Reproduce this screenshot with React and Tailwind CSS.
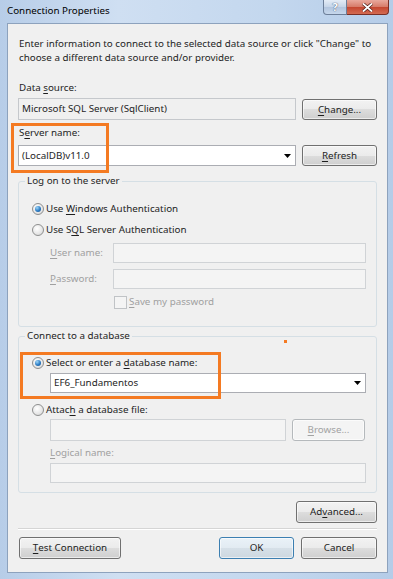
import React from "react";

const U = ({ children }) => <span className="underline underline-offset-[2px] decoration-1">{children}</span>;

function Btn({ children, className = "", kind = "normal" }) {
  const styles =
    kind === "primary"
      ? "border-[#3c7fb1] bg-[linear-gradient(#eaf2f8,#e2ebf2_50%,#d6e0e8_50%,#cdd8e0)] text-[#1e1e1e]"
      : kind === "disabled"
      ? "border-[#b5b9bc] bg-[#f4f4f4] text-[#a3a3a3]"
      : "border-[#707070] bg-[linear-gradient(#f2f2f2,#ebebeb_50%,#dddddd_50%,#cfcfcf)] text-[#1e1e1e]";
  return (
    <div className={`flex items-center justify-center rounded-[3px] border shadow-[inset_0_0_0_1px_rgba(255,255,255,0.6)] ${styles} ${className}`}>
      {children}
    </div>
  );
}

function Radio({ checked }) {
  return (
    <div className="w-[12px] h-[12px] rounded-full border border-[#8e8f8f] bg-[radial-gradient(circle_at_40%_35%,#ffffff,#e6e6e6_60%,#cfcfcf)] flex items-center justify-center shrink-0">
      {checked && (
        <div className="w-[6px] h-[6px] rounded-full bg-[radial-gradient(circle_at_35%_30%,#9fd6f7,#2a7bc4_55%,#1b4f8a)]" />
      )}
    </div>
  );
}

function Arrow() {
  return (
    <svg width="7" height="4" viewBox="0 0 7 4" className="shrink-0">
      <polygon points="0,0 7,0 3.5,4" fill="#000" />
    </svg>
  );
}

export default function App() {
  return (
    <div
      className="relative w-[393px] h-[579px] flex flex-col bg-[linear-gradient(90deg,#b7cde8,#cfdff2_30%,#c3d7ee_70%,#b5cce8)] text-[9.8px] leading-[14px] text-[#1e1e1e] overflow-hidden"
      style={{ fontFamily: '"Segoe UI", "Noto Sans", Arial, sans-serif' }}
    >
      {/* Title bar */}
      <div className="h-[23px] flex items-start shrink-0">
        <div className="pl-[7px] pt-[4px] text-[#000] leading-[14px]">Connection Properties</div>
        <div className="ml-auto mr-[4px] flex">
          <div className="w-[24px] h-[15px] rounded-bl-[4px] border border-t-0 border-[#6d7f99] bg-[linear-gradient(#e4ecf6,#c6d5e8_50%,#b2c5de_50%,#c6d7ec)] flex items-center justify-center text-[11px] font-bold text-white [text-shadow:0_0_1px_#4a5f7e,0_0_1px_#4a5f7e]">
            ?
          </div>
          <div className="w-[42px] h-[15px] rounded-br-[4px] border border-l-0 border-t-0 border-[#7a2f26] bg-[linear-gradient(#e9a99d,#d67a68_50%,#c4452f_50%,#d36b52)] flex items-center justify-center">
            <svg width="11" height="9" viewBox="0 0 11 9">
              <path d="M1 0.5 L10 8.5 M10 0.5 L1 8.5" stroke="#4a1a14" strokeWidth="3.2" />
              <path d="M1 0.5 L10 8.5 M10 0.5 L1 8.5" stroke="#ffffff" strokeWidth="1.8" />
            </svg>
          </div>
        </div>
      </div>

      {/* Client area */}
      <div className="ml-[7px] mr-[5px] h-[550px] border border-[#8da2bd] bg-[#f0f0f0] flex flex-col pl-[10px] pr-[10px] pt-[13px] shrink-0">
        <div className="pl-[1px] whitespace-nowrap">
          <div>Enter information to connect to the selected data source or click "Change" to</div>
          <div>choose a different data source and/or provider.</div>
        </div>

        <div className="mt-[16px] pl-[1px]">
          Data <U>s</U>ource:
        </div>
        <div className="mt-[3px] flex items-start">
          <div className="w-[278px] h-[22px] border border-[#c5c8cc] bg-[#f0f0f0] flex items-center pl-[3px]">
            Microsoft SQL Server (SqlClient)
          </div>
          <Btn className="ml-auto w-[75px] h-[21px] mt-[1px]">
            <U>C</U>hange...
          </Btn>
        </div>

        <div className="mt-[6px] pl-[1px]">
          S<U>e</U>rver name:
        </div>
        <div className="mt-[5px] flex items-start">
          <div className="w-[278px] h-[21px] border border-[#abadb3] bg-white flex items-center pl-[3px] pr-[4px]">
            <span>(LocalDB)v11.0</span>
            <div className="ml-auto">
              <Arrow />
            </div>
          </div>
          <Btn className="ml-auto w-[75px] h-[21px]">
            <U>R</U>efresh
          </Btn>
        </div>

        {/* Log on group */}
        <fieldset className="mt-[8px] border border-[#d5dfe5] rounded-[3px] pl-[13px] pr-[10px] pb-[17px]">
          <legend className="-ml-[7px] px-[2px] leading-[14px]">Log on to the server</legend>
          <div className="mt-[14px] flex items-center h-[14px]">
            <Radio checked />
            <span className="ml-[2px]">
              Use <U>W</U>indows Authentication
            </span>
          </div>
          <div className="mt-[7px] flex items-center h-[14px]">
            <Radio />
            <span className="ml-[2px]">
              Use S<U>Q</U>L Server Authentication
            </span>
          </div>
          <div className="mt-[6px] flex items-center h-[20px] text-[#a0a0a0]">
            <span className="pl-[18px] whitespace-nowrap">
              <U>U</U>ser name:
            </span>
            <div className="ml-auto w-[253px] h-[20px] border border-[#d0d3d6] bg-[#f4f4f4]" />
          </div>
          <div className="mt-[6px] flex items-center h-[20px] text-[#a0a0a0]">
            <span className="pl-[18px] whitespace-nowrap">
              <U>P</U>assword:
            </span>
            <div className="ml-auto w-[253px] h-[20px] border border-[#d0d3d6] bg-[#f4f4f4]" />
          </div>
          <div className="mt-[6px] flex items-center h-[14px] text-[#a0a0a0] pl-[82px]">
            <div className="w-[13px] h-[13px] border border-[#c0c3c6] bg-[#f4f4f4] shrink-0" />
            <span className="ml-[2px]">
              <U>S</U>ave my password
            </span>
          </div>
        </fieldset>

        {/* Connect to a database group */}
        <fieldset className="mt-[2px] border border-[#d5dfe5] rounded-[3px] pl-[13px] pr-[10px] pb-[9px]">
          <legend className="-ml-[7px] px-[2px] leading-[14px]">Connect to a database</legend>
          <div className="mt-[13px] flex items-center h-[14px]">
            <Radio checked />
            <span className="ml-[2px]">
              Select or enter a <U>d</U>atabase name:
            </span>
          </div>
          <div className="mt-[3px] ml-[18px] h-[20px] border border-[#abadb3] bg-white flex items-center pl-[3px] pr-[4px]">
            <span>EF6_Fundamentos</span>
            <div className="ml-auto">
              <Arrow />
            </div>
          </div>
          <div className="mt-[10px] flex items-center h-[14px]">
            <Radio />
            <span className="ml-[2px]">
              Attac<U>h</U> a database file:
            </span>
          </div>
          <div className="mt-[2px] ml-[18px] flex items-start h-[22px]">
            <div className="w-[236px] h-[22px] border border-[#d0d3d6] bg-[#f4f4f4]" />
            <Btn kind="disabled" className="ml-auto mr-[1px] w-[73px] h-[22px]">
              <U>B</U>rowse...
            </Btn>
          </div>
          <div className="mt-[5px] ml-[18px] text-[#a0a0a0]">
            <U>L</U>ogical name:
          </div>
          <div className="mt-[3px] ml-[18px] h-[20px] border border-[#d0d3d6] bg-[#f4f4f4]" />
        </fieldset>

        <div className="mt-[8px] flex justify-end">
          <Btn className="w-[81px] h-[22px]">
            Ad<U>v</U>anced...
          </Btn>
        </div>

        <div className="mt-[5px] h-[2px] border-t border-[#d5d5d5] border-b-white border-b" />

        <div className="mt-[7px] flex items-start">
          <Btn className="ml-[1px] w-[102px] h-[22px]">
            <U>T</U>est Connection
          </Btn>
          <Btn kind="primary" className="ml-auto w-[75px] h-[22px]">
            OK
          </Btn>
          <Btn className="ml-[7px] w-[76px] h-[22px]">Cancel</Btn>
        </div>
      </div>

      {/* Annotations */}
      <div className="absolute left-[11px] top-[123px] w-[98px] h-[50px] border-[3px] border-[#f47a22]" />
      <div className="absolute left-[20px] top-[352px] w-[201px] h-[47px] border-[3px] border-[#f47a22]" />
      <div className="absolute left-[284px] top-[340px] w-[3px] h-[3px] bg-[#f47a22]" />
    </div>
  );
}
